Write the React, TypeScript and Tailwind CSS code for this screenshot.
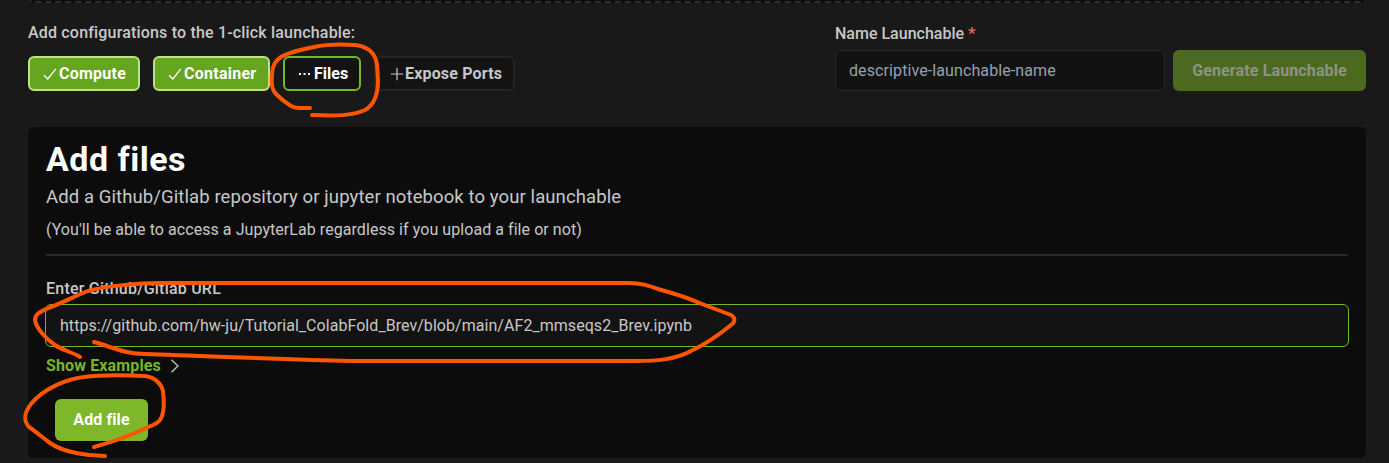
import React from "react";

function CheckIcon() {
  return (
    <svg className="h-[14px] w-[14px] shrink-0" viewBox="0 0 14 14" fill="none" stroke="currentColor" strokeWidth="1.25">
      <path d="M1 8.2 4.8 12 12.8 1.8" />
    </svg>
  );
}

function DotsIcon() {
  return (
    <svg className="h-[14px] w-[14px] shrink-0" viewBox="0 0 14 14" fill="currentColor">
      <rect x="1" y="6" width="2" height="2" />
      <rect x="5.500" y="6" width="2" height="2" />
      <rect x="10" y="6" width="2" height="2" />
    </svg>
  );
}

function PlusIcon() {
  return (
    <svg className="h-[14px] w-[14px] shrink-0" viewBox="0 0 14 14" fill="none" stroke="currentColor" strokeWidth="1.2">
      <path d="M7 .8v12.4M.8 7h12.4" />
    </svg>
  );
}

function Annotations() {
  return (
    <svg
      className="pointer-events-none absolute inset-0 h-[463px] w-[1389px]"
      viewBox="0 0 1389 463"
      fill="none"
      stroke="#ff5500"
      strokeWidth="4"
      strokeLinecap="round"
      strokeLinejoin="round"
    >
      <path d="M310 108 C302 108 296 109 291 106 C286 103 280 98 276 94 C272 90 271 83 272 74 C272 66 275 61 281 57 C289 52 304 49 314 47 C327 44 339 44 355 45 C365 46 373 51 376 60 C378 66 377 70 378 80 C378 93 374 105 365 110 C352 116 335 116 312 115" />
      <path d="M80 357 C72 352 62 350 55 345 C46 339 36 328 35 320 C35 314 40 312 46 309 C62 303 75 296 88 291 C104 286 140 283 160 283 L628 283 C642 283 650 286 658 289 C676 294 691 299 702 304 L731 315 C736 318 735 322 731 325 C720 334 706 344 691 351 C674 360 656 361 635 361 L350 361 C290 360 210 356 145 354 C125 354 112 347 94 342" />
      <path d="M105 456 C90 456 64 453 50 443 C43 438 35 431 29 427 C23 420 24 413 31 404 C43 389 66 379 84 377 C105 374 126 375 145 376 C154 377 161 383 163 391 C164 400 164 411 162 416 C160 423 153 425 146 428 C130 436 112 442 94 447" />
    </svg>
  );
}

export default function App() {
  return (
    <div className="relative flex h-[463px] w-[1389px] flex-col overflow-hidden bg-[#191919] pr-[23px] pl-7 font-['Roboto','Noto_Sans',sans-serif] text-base text-[#c8c8c8]">
      <div className="-mt-[37px] h-10 shrink-0 rounded-md border-2 border-dashed border-[#2e2e2e] bg-[#0c0c0c]" />

      <div className="flex h-[124px] shrink-0 justify-between">
        <div className="pt-[18px]">
          <div className="h-[22px] leading-[23px] font-medium tracking-[0.18px] whitespace-nowrap">
            Add configurations to the 1-click launchable:
          </div>
          <div className="mt-[13px] flex h-[35px] gap-[13px] font-bold tracking-[0.25px] whitespace-nowrap">
            <button className="flex w-[112px] items-center gap-[2px] rounded-md border-2 border-[#bfe285] bg-[#66a51f] pl-[13px] text-white">
              <CheckIcon />
              <span>Compute</span>
            </button>
            <button className="flex w-[117px] items-center gap-[2px] rounded-md border-2 border-[#bfe285] bg-[#66a51f] pl-[13px] text-white">
              <CheckIcon />
              <span>Container</span>
            </button>
            <button className="flex w-[78px] items-center gap-[2px] rounded-md border-2 border-[#76b728] bg-[#131313] pl-[13px] text-white">
              <DotsIcon />
              <span className="tracking-normal">Files</span>
            </button>
            <button className="flex w-[141px] items-center gap-px rounded-md border-2 border-[#252525] bg-[#131313] pl-[14px]">
              <PlusIcon />
              <span className="tracking-[0.17px]">Expose Ports</span>
            </button>
          </div>
        </div>

        <div className="pt-5">
          <label className="block h-[22px] leading-[22px] font-medium whitespace-nowrap">
            Name Launchable <span className="text-[17px] leading-none text-[#f0655f]">*</span>
          </label>
          <div className="mt-[5px] flex h-[41px] gap-2">
            <div className="flex w-[330px] items-center rounded-md border border-[#292929] bg-[#121212] px-[13px] tracking-[0.1px] text-[#98a1aa]">
              <span>descriptive-launchable-name</span>
            </div>
            <button className="w-[193px] rounded-md bg-[#4b6a20] font-bold tracking-[0.13px] whitespace-nowrap text-[#8d9385]">
              <span>Generate Launchable</span>
            </button>
          </div>
        </div>
      </div>

      <main className="flex h-[331px] shrink-0 flex-col rounded-md bg-[#0c0c0c] px-[18px] whitespace-nowrap">
        <h1 className="mt-3 h-10 text-[34px] leading-10 font-bold tracking-[0.5px] text-white">Add files</h1>
        <p className="mt-[5px] h-[26px] text-[18.5px] leading-[26px] tracking-[0.1px]">
          Add a Github/Gitlab repository or jupyter notebook to your launchable
        </p>
        <p className="mt-[9px] h-[22px] leading-[22px] tracking-[0.06px]">
          (You'll be able to access a JupyterLab regardless if you upload a file or not)
        </p>
        <hr className="mt-[13px] h-[2px] border-0 bg-[#292929]" />
        <label className="mt-[22px] h-[22px] leading-[22px] font-medium tracking-[0.22px]">Enter Github/Gitlab URL</label>
        <div className="-mx-px mt-[4px] flex h-[43px] items-center rounded-md border border-[#76b728] bg-[#131313] px-[14px] tracking-[0.05px]">
          <span>https://github.com/hw-ju/Tutorial_ColabFold_Brev/blob/main/AF2_mmseqs2_Brev.ipynb</span>
        </div>
        <div className="mt-2 flex h-[22px] items-center gap-[9px] font-bold tracking-[0.13px] text-[#76b728]">
          <span>Show Examples</span>
          <svg className="h-[14px] w-[10px] text-[#c8c8c8]" viewBox="0 0 10 14" fill="none" stroke="currentColor" strokeWidth="1.3">
            <path d="M1.500.7 8 7l-6.500 6.300" />
          </svg>
        </div>
        <button className="mt-[22px] ml-[9px] h-[42px] w-[93px] rounded-md bg-[#7eb72a] font-bold tracking-[0.1px] text-white">
          <span>Add file</span>
        </button>
      </main>
      <Annotations />
    </div>
  );
}
